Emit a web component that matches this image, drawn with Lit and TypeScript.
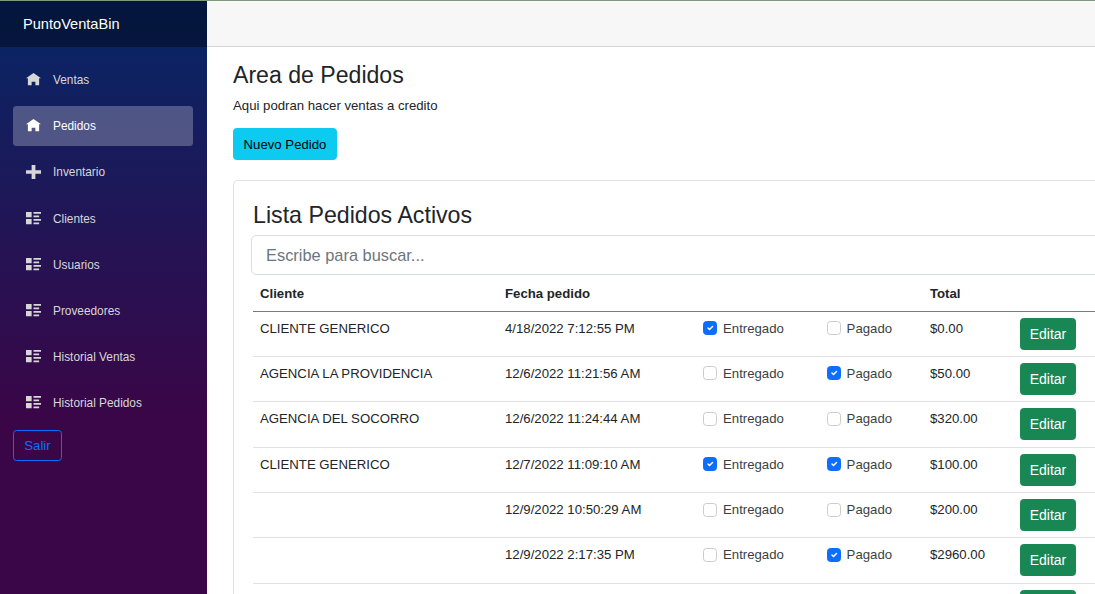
import {css, html, LitElement, svg, type SVGTemplateResult} from 'lit';
import {customElement} from 'lit/decorators.js';

interface Pedido {
    cliente: string;
    fecha: string;
    entregado: boolean;
    pagado: boolean;
    total: string;
}

const HOME = 'M4 0l-4 3h1v4h2v-2h2v2h2v-4.03l1 .03-4-3z';
const PLUS = 'M3 0v3h-3v2h3v3h2v-3h3v-2h-3v-3h-2z';
const LIST = 'M0 0v3h3v-3h-3zm4 0v1h4v-1h-4zm0 2v1h3v-1h-3zm-4 2v3h3v-3h-3zm4 0v1h4v-1h-4zm0 2v1h3v-1h-3z';

const NAV = [
    {label: 'Ventas', icon: HOME},
    {label: 'Pedidos', icon: HOME, active: true},
    {label: 'Inventario', icon: PLUS},
    {label: 'Clientes', icon: LIST},
    {label: 'Usuarios', icon: LIST},
    {label: 'Proveedores', icon: LIST},
    {label: 'Historial Ventas', icon: LIST},
    {label: 'Historial Pedidos', icon: LIST},
];

const PEDIDOS: Pedido[] = [
    {cliente: 'CLIENTE GENERICO', fecha: '4/18/2022 7:12:55 PM', entregado: true, pagado: false, total: '$0.00'},
    {cliente: 'AGENCIA LA PROVIDENCIA', fecha: '12/6/2022 11:21:56 AM', entregado: false, pagado: true, total: '$50.00'},
    {cliente: 'AGENCIA DEL SOCORRO', fecha: '12/6/2022 11:24:44 AM', entregado: false, pagado: false, total: '$320.00'},
    {cliente: 'CLIENTE GENERICO', fecha: '12/7/2022 11:09:10 AM', entregado: true, pagado: true, total: '$100.00'},
    {cliente: '', fecha: '12/9/2022 10:50:29 AM', entregado: false, pagado: false, total: '$200.00'},
    {cliente: '', fecha: '12/9/2022 2:17:35 PM', entregado: false, pagado: true, total: '$2960.00'},
    {cliente: '', fecha: '', entregado: false, pagado: false, total: ''},
];

@customElement('app-root')
export class AppRoot extends LitElement {

    static styles = css`
        :host {
            display: flex;
            height: 594px;
            overflow: hidden;
            box-sizing: border-box;
            border-top: 1px solid #7f9a80;
            font-family: "Liberation Sans", Arial, sans-serif;
            font-size: 13.2px;
            color: #212529;
            background: #fff;
        }
        .sidebar {
            width: 207px;
            flex: none;
            background: linear-gradient(180deg, #052767 0%, #3a0647 70%);
        }
        .brand {
            height: 46px;
            display: flex;
            align-items: center;
            padding-left: 23px;
            background: rgba(0, 0, 0, 0.4);
            color: #fff;
            font-size: 14.6px;
        }
        .nav {
            display: flex;
            flex-direction: column;
            gap: 6.2px;
            padding: 13px 14px 7px 13px;
        }
        .link {
            height: 40px;
            display: flex;
            align-items: center;
            padding-left: 13px;
            border-radius: 3.5px;
            color: #d7d7d7;
            font-size: 11.85px;
        }
        .link.active {
            background: rgba(255, 255, 255, 0.25);
            color: #fff;
        }
        .link svg {
            width: 15px;
            height: 14px;
            margin-right: 12px;
            fill: currentColor;
        }
        .logout {
            margin-left: 13px;
            width: 49px;
            height: 31px;
            box-sizing: border-box;
            padding: 0;
            border: 1px solid #0d6efd;
            border-radius: 3.5px;
            background: none;
            color: #0d6efd;
            font: inherit;
        }
        .main {
            flex: 1;
            min-width: 0;
        }
        .top {
            height: 46px;
            box-sizing: border-box;
            background: #f7f7f7;
            border-bottom: 1px solid #d6d5d5;
        }
        .content {
            padding: 15px 0 0 26px;
        }
        h1 {
            margin: 0;
            font-size: 23.1px;
            font-weight: 400;
            line-height: 27px;
        }
        p {
            margin: 6px 0 12px;
            line-height: 21px;
        }
        .new {
            display: block;
            height: 32px;
            width: 104px;
            padding: 0;
            border: 1px solid #0dcaf0;
            border-radius: 3.5px;
            background: #0dcaf0;
            color: #000;
            font: inherit;
        }
        .card {
            width: 1000px;
            box-sizing: border-box;
            margin-top: 20px;
            padding: 20px 17px 0;
            border: 1px solid #e2e2e2;
            border-radius: 4px;
        }
        h2 {
            margin: 0 0 6px 2px;
            font-size: 23.2px;
            font-weight: 400;
            line-height: 28px;
        }
        .search {
            height: 40px;
            box-sizing: border-box;
            display: flex;
            align-items: center;
            padding-left: 14px;
            border: 1px solid #d8dde2;
            border-radius: 5px;
            color: #6c757d;
            font-size: 16.4px;
        }
        table {
            margin: 0 0 0 2px;
            width: 960px;
            table-layout: fixed;
            border-collapse: collapse;
        }
        th, td {
            padding: 0 0 0 7px;
            text-align: left;
            vertical-align: top;
        }
        th {
            height: 36px;
            padding-top: 2px;
            box-sizing: border-box;
            vertical-align: middle;
            font-weight: 700;
            border-bottom: 1px solid #7a7a7a;
        }
        td {
            height: 45.38px;
            box-sizing: border-box;
            padding-top: 8px;
            line-height: 17px;
            border-bottom: 1px solid #dee2e6;
        }
        .check {
            display: flex;
            align-items: center;
            gap: 6px;
            color: #3a3f44;
        }
        .box {
            width: 14px;
            height: 14px;
            box-sizing: border-box;
            border: 1px solid #ccc;
            border-radius: 3.5px;
            background: #fff;
        }
        .box.on {
            border-color: #0d6efd;
            background: #0d6efd;
            display: flex;
            align-items: center;
            justify-content: center;
        }
        .box svg {
            width: 10px;
            height: 10px;
        }
        td.action {
            padding-top: 6px;
        }
        .edit {
            display: block;
            width: 56px;
            height: 32px;
            padding: 0;
            border: 1px solid #198754;
            border-radius: 3.5px;
            background: #198754;
            color: #fff;
            font: 14px "Liberation Sans", Arial, sans-serif;
        }
        .col-a { width: 245px; }
        .col-b { width: 198px; }
        .col-c { width: 123.6px; }
        .col-d { width: 103.4px; }
        .col-e { width: 90px; }
    `;

    private icon(d: string): SVGTemplateResult {
        return svg`<svg viewBox="0 0 8 8" preserveAspectRatio="none"><path d=${d}></path></svg>`;
    }

    private checkbox(label: string, on: boolean) {
        return html`<div class="check">
            <span class="box ${on ? 'on' : ''}">${on
                ? html`<svg viewBox="0 0 20 20"><path fill="none" stroke="#fff" stroke-linecap="round" stroke-linejoin="round" stroke-width="3" d="M6 10l3 3 6-6"></path></svg>`
                : ''}</span>
            ${label}
        </div>`;
    }

    render() {
        return html`
            <aside class="sidebar">
                <div class="brand">PuntoVentaBin</div>
                <nav class="nav">
                    ${NAV.map(item => html`<div class="link ${item.active ? 'active' : ''}">${this.icon(item.icon)}${item.label}</div>`)}
                </nav>
                <button class="logout">Salir</button>
            </aside>
            <div class="main">
                <div class="top"></div>
                <div class="content">
                    <h1>Area de Pedidos</h1>
                    <p>Aqui podran hacer ventas a credito</p>
                    <button class="new">Nuevo Pedido</button>
                    <div class="card">
                        <h2>Lista Pedidos Activos</h2>
                        <div class="search">Escribe para buscar...</div>
                        <table>
                            <colgroup>
                                <col class="col-a"><col class="col-b"><col class="col-c"><col class="col-d"><col class="col-e"><col>
                            </colgroup>
                            <thead>
                                <tr><th>Cliente</th><th>Fecha pedido</th><th></th><th></th><th>Total</th><th></th></tr>
                            </thead>
                            <tbody>
                                ${PEDIDOS.map(p => html`<tr>
                                    <td>${p.cliente}</td>
                                    <td>${p.fecha}</td>
                                    <td>${p.fecha ? this.checkbox('Entregado', p.entregado) : ''}</td>
                                    <td>${p.fecha ? this.checkbox('Pagado', p.pagado) : ''}</td>
                                    <td>${p.total}</td>
                                    <td class="action"><button class="edit">Editar</button></td>
                                </tr>`)}
                            </tbody>
                        </table>
                    </div>
                </div>
            </div>
        `;
    }
}
